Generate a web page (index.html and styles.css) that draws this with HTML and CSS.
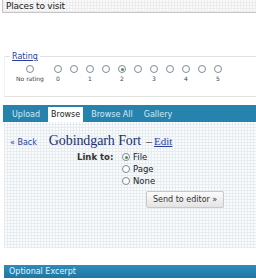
FILE: index.html
```html
<!DOCTYPE html>
<html>
<head>
<meta charset="utf-8">
<link rel="stylesheet" href="styles.css">
</head>
<body>
<div class="page">
  <div class="title-box">Places to visit</div>

  <fieldset class="rating">
    <legend><a href="#">Rating</a></legend>
    <div class="rate-grid">
      <span class="radio c1"></span>
      <span class="radio c2"></span>
      <span class="radio c3"></span>
      <span class="radio c4"></span>
      <span class="radio c5"></span>
      <span class="radio checked c6"></span>
      <span class="radio c7"></span>
      <span class="radio c8"></span>
      <span class="radio c9"></span>
      <span class="radio c10"></span>
      <span class="radio c11"></span>
      <span class="radio c12"></span>
      <span class="rlabel c1">No rating</span>
      <span class="rlabel c2">0</span>
      <span class="rlabel c4">1</span>
      <span class="rlabel c6">2</span>
      <span class="rlabel c8">3</span>
      <span class="rlabel c10">4</span>
      <span class="rlabel c12">5</span>
    </div>
  </fieldset>

  <div class="uploader">
    <ul class="tabs">
      <li class="tab">Upload</li>
      <li class="tab current">Browse</li>
      <li class="tab">Browse All</li>
      <li class="tab">Gallery</li>
    </ul>
    <div class="browse">
      <div class="head">
        <a class="back" href="#">« Back</a>
        <h2 class="name">Gobindgarh Fort</h2>
        <span class="dash">–</span>
        <a class="edit" href="#">Edit</a>
      </div>
      <div class="linkto">
        <span class="lt-label">Link to:</span>
        <div class="lt-options">
          <div class="opt"><span class="radio checked"></span>File</div>
          <div class="opt"><span class="radio"></span>Page</div>
          <div class="opt"><span class="radio"></span>None</div>
        </div>
      </div>
      <div class="btn-row"><button class="send">Send to editor »</button></div>
    </div>
  </div>

  <div class="excerpt-bar">Optional Excerpt</div>
</div>
</body>
</html>
```

FILE: styles.css
```css
html, body {
  margin: 0;
  padding: 0;
  background: #fff;
}
.page {
  width: 256px;
  font-family: "DejaVu Sans", Verdana, sans-serif;
  color: #333;
}
.title-box {
  margin-left: 2px;
  height: 13px;
  border: 1px solid #c6c6c6;
  border-top: 0;
  border-right: 0;
  box-sizing: border-box;
  padding-left: 3px;
  font-size: 9px;
  line-height: 12px;
  letter-spacing: -0.2px;
  color: #222;
  background-color: #fafafa;
  background-image:
    repeating-linear-gradient(90deg, #ececec 0 1px, transparent 1px 3px),
    repeating-linear-gradient(0deg, #ececec 0 1px, transparent 1px 3px);
}
.rating {
  margin: 39px 0 0 4px;
  padding: 0;
  height: 45px;
  box-sizing: border-box;
  border: 1px solid #e2e2e2;
  border-left-color: #f3f3f3;
  border-right: 0;
  min-width: 0;
}
.rating legend {
  padding: 0 2px;
  margin-left: 5px;
  font-size: 8px;
  line-height: 9px;
}
.rating legend a {
  color: #2a3f9c;
  text-decoration: underline;
}
.rate-grid {
  display: grid;
  grid-template-columns: 32px 4px repeat(11, 16px);
  grid-template-rows: 10px 9px;
  row-gap: 0;
  margin: 3px 0 0 9px;
}
.rate-grid .c1 { grid-column: 1; }
.rate-grid .c2 { grid-column: 3; }
.rate-grid .c3 { grid-column: 4; }
.rate-grid .c4 { grid-column: 5; }
.rate-grid .c5 { grid-column: 6; }
.rate-grid .c6 { grid-column: 7; }
.rate-grid .c7 { grid-column: 8; }
.rate-grid .c8 { grid-column: 9; }
.rate-grid .c9 { grid-column: 10; }
.rate-grid .c10 { grid-column: 11; }
.rate-grid .c11 { grid-column: 12; }
.rate-grid .c12 { grid-column: 13; }
.rate-grid .radio {
  grid-row: 1;
  justify-self: center;
  align-self: center;
}
.rlabel {
  grid-row: 2;
  justify-self: center;
  font-size: 6px;
  line-height: 9px;
  color: #444;
}
.radio {
  display: inline-block;
  width: 8px;
  height: 8px;
  box-sizing: border-box;
  border: 1px solid #7d8a98;
  border-radius: 50%;
  background: #fff;
  position: relative;
}
.radio.checked::after {
  content: "";
  position: absolute;
  left: 1.5px;
  top: 1.5px;
  width: 3px;
  height: 3px;
  border-radius: 50%;
  background: #4f8a5a;
}
.uploader {
  margin: 8px 0 0 3px;
}
.tabs {
  list-style: none;
  margin: 0;
  padding: 2px 0 0 6px;
  height: 17px;
  box-sizing: border-box;
  background: #2683ae;
  display: flex;
  gap: 5px;
}
.tab {
  font-size: 8px;
  line-height: 15px;
  padding: 0 3px;
  color: #d6eaf4;
}
.tab.current {
  background: #fff;
  color: #222;
}
.browse {
  height: 126px;
  margin-left: 1px;
  background-color: #fbfcfd;
  background-image:
    repeating-linear-gradient(90deg, #e6ecf0 0 1px, transparent 1px 3px),
    repeating-linear-gradient(0deg, #e6ecf0 0 1px, transparent 1px 3px);
  padding-top: 9px;
  box-sizing: border-box;
}
.head {
  display: flex;
  align-items: baseline;
  padding-left: 6px;
}
.back {
  font-size: 8px;
  color: #2a3f9c;
  text-decoration: none;
}
.name {
  margin: 0 0 0 12px;
  font-family: "Liberation Serif", "Times New Roman", serif;
  font-weight: normal;
  font-size: 14px;
  letter-spacing: -0.1px;
  line-height: 20px;
  color: #22306e;
}
.dash {
  margin-left: 5px;
  font-family: "Liberation Serif", serif;
  font-size: 12px;
  color: #333;
}
.edit {
  margin-left: 2px;
  font-family: "Liberation Serif", serif;
  font-size: 11px;
  color: #2a3f9c;
  text-decoration: underline;
}
.linkto {
  display: flex;
  margin-top: 0;
  padding-left: 73px;
}
.lt-label {
  font-size: 8.5px;
  font-weight: bold;
  line-height: 12px;
  width: 45px;
}
.opt {
  display: flex;
  align-items: center;
  gap: 3px;
  font-size: 8.5px;
  line-height: 12px;
  color: #222;
}
.btn-row {
  padding-left: 142px;
  margin-top: 0;
}
.send {
  font-family: "DejaVu Sans", Verdana, sans-serif;
  font-size: 8px;
  height: 17px;
  padding: 0 6px;
  border: 1px solid #c8c8c8;
  border-radius: 2px;
  background: linear-gradient(#fbfbfb, #e4e4e4);
  color: #333;
}
.excerpt-bar {
  margin: 17px 0 0 4px;
  height: 13px;
  padding-left: 5px;
  font-size: 8px;
  line-height: 13px;
  color: #e4f1f8;
  background: linear-gradient(#2c8cba, #1f77a3);
}
```
